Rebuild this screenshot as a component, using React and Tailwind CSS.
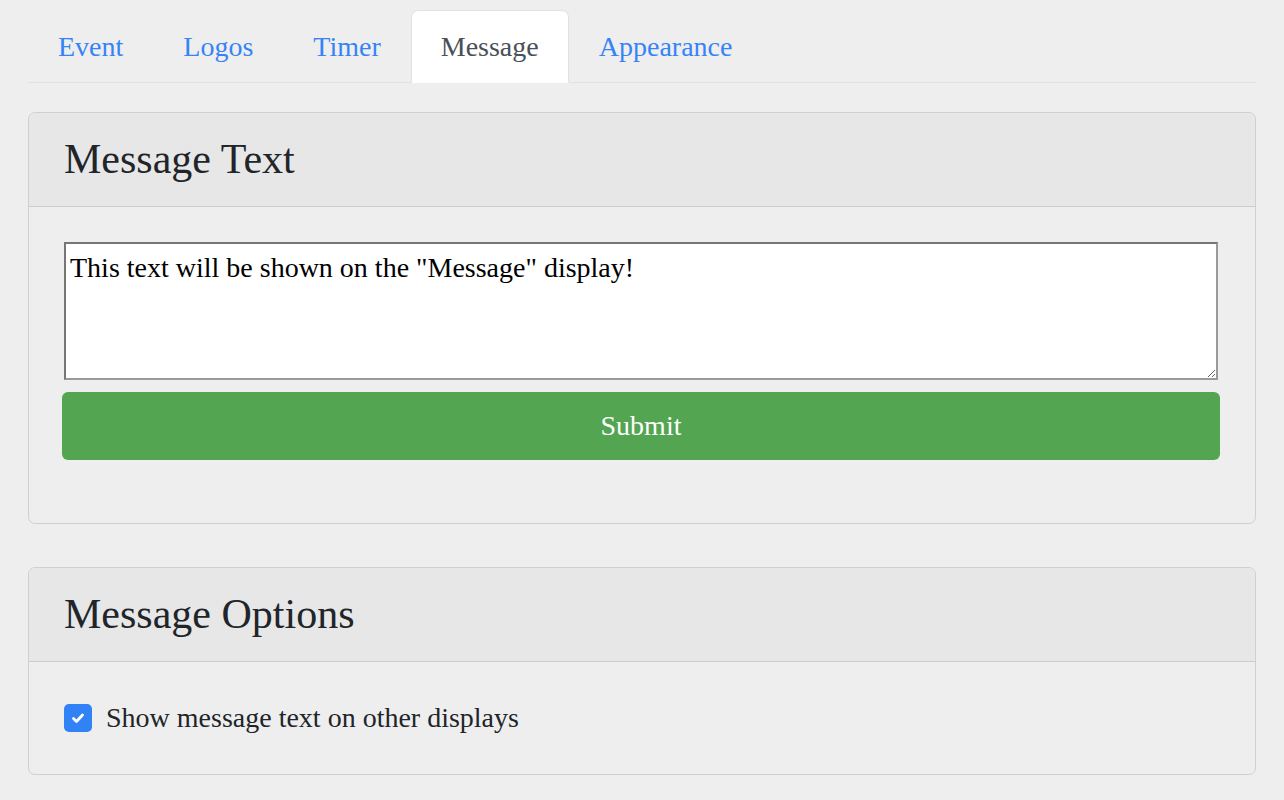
export default function App() {
  const tabs = ["Event", "Logos", "Timer", "Message", "Appearance"];
  return (
    <div
      className="min-h-[800px] bg-[#eeeeee] px-7 pt-[10px] text-[28px] text-[#212529]"
      style={{ fontFamily: '"Liberation Serif", "Times New Roman", serif' }}
    >
      <ul className="flex border-b border-[#dee2e6]">
        {tabs.map((t) => (
          <li key={t} className="-mb-px">
            {t === "Message" ? (
              <span className="block rounded-t-[7px] border border-[#dee2e6] border-b-white bg-white px-[29px] pt-[15px] pb-[14px] leading-[42px] text-[#495057]">
                {t}
              </span>
            ) : (
              <span className="block border border-transparent px-[29px] pt-[15px] pb-[14px] leading-[42px] text-[#3584f7]">
                {t}
              </span>
            )}
          </li>
        ))}
      </ul>

      <div className="mt-[29px] rounded-[7px] border border-[#d0d0d0]">
        <div className="rounded-t-[7px] border-b border-[#cccccc] bg-[#e7e7e7] px-[35px] py-[21px]">
          <h3 className="text-[42px] leading-[51px] text-[#212529]">Message Text</h3>
        </div>
        <div className="pl-[35px] pr-[37px] pt-[35px] pb-[63px]">
          <textarea
            className="block h-[138px] w-full border-2 border-t-[#767676] border-l-[#767676] border-r-[#9a9a9a] border-b-[#9a9a9a] bg-white px-[4px] py-[8px] text-[28px] leading-[32px] text-black outline-none"
            style={{ fontFamily: '"Liberation Serif", "Times New Roman", serif' }}
            defaultValue={'This text will be shown on the "Message" display!'}
          />
          <button
            className="-mx-[2px] mt-[12px] block h-[68px] w-[calc(100%+4px)] rounded-[6px] bg-[#53a551] text-[28px] text-white"
            style={{ fontFamily: '"Liberation Serif", "Times New Roman", serif' }}
          >
            Submit
          </button>
        </div>
      </div>

      <div className="mt-[43px] rounded-[7px] border border-[#d0d0d0]">
        <div className="rounded-t-[7px] border-b border-[#cccccc] bg-[#e7e7e7] px-[35px] py-[21px]">
          <h3 className="text-[42px] leading-[51px] text-[#212529]">Message Options</h3>
        </div>
        <div className="px-[35px] py-[35px]">
          <label className="flex items-center gap-[14px] leading-[42px]">
            <span className="flex h-[28px] w-[28px] items-center justify-center rounded-[5px] bg-[#3182f6]">
              <svg width="16" height="16" viewBox="0 0 16 16" fill="none">
                <path d="M3.5 8.5l3 3 6-6.5" stroke="white" strokeWidth="2.8" strokeLinecap="round" strokeLinejoin="round" />
              </svg>
            </span>
            <span>Show message text on other displays</span>
          </label>
        </div>
      </div>
    </div>
  );
}
